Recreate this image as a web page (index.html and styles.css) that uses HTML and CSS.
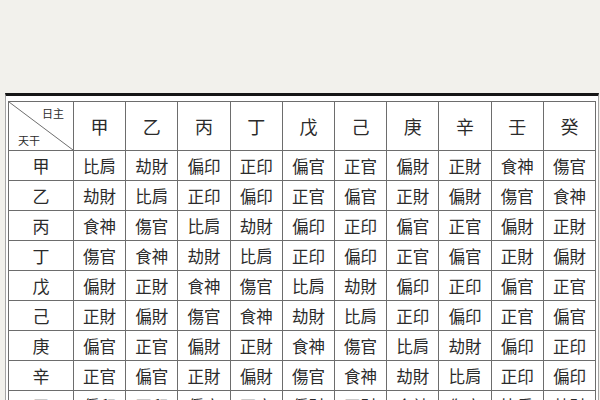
FILE: index.html
```html
<!DOCTYPE html>
<html lang="zh-Hant">
<head>
<meta charset="utf-8">
<title>十神表</title>
<link rel="stylesheet" href="styles.css">
</head>
<body>
<div class="sheet">
  <div class="grid">
    <div class="corner"><span class="day">日主</span><span class="stem">天干</span></div>
    <div class="head">甲</div><div class="head">乙</div><div class="head">丙</div><div class="head">丁</div><div class="head">戊</div><div class="head">己</div><div class="head">庚</div><div class="head">辛</div><div class="head">壬</div><div class="head">癸</div>

    <div class="label">甲</div><div class="cell">比肩</div><div class="cell">劫財</div><div class="cell">偏印</div><div class="cell">正印</div><div class="cell">偏官</div><div class="cell">正官</div><div class="cell">偏財</div><div class="cell">正財</div><div class="cell">食神</div><div class="cell">傷官</div>
    <div class="label">乙</div><div class="cell">劫財</div><div class="cell">比肩</div><div class="cell">正印</div><div class="cell">偏印</div><div class="cell">正官</div><div class="cell">偏官</div><div class="cell">正財</div><div class="cell">偏財</div><div class="cell">傷官</div><div class="cell">食神</div>
    <div class="label">丙</div><div class="cell">食神</div><div class="cell">傷官</div><div class="cell">比肩</div><div class="cell">劫財</div><div class="cell">偏印</div><div class="cell">正印</div><div class="cell">偏官</div><div class="cell">正官</div><div class="cell">偏財</div><div class="cell">正財</div>
    <div class="label">丁</div><div class="cell">傷官</div><div class="cell">食神</div><div class="cell">劫財</div><div class="cell">比肩</div><div class="cell">正印</div><div class="cell">偏印</div><div class="cell">正官</div><div class="cell">偏官</div><div class="cell">正財</div><div class="cell">偏財</div>
    <div class="label">戊</div><div class="cell">偏財</div><div class="cell">正財</div><div class="cell">食神</div><div class="cell">傷官</div><div class="cell">比肩</div><div class="cell">劫財</div><div class="cell">偏印</div><div class="cell">正印</div><div class="cell">偏官</div><div class="cell">正官</div>
    <div class="label">己</div><div class="cell">正財</div><div class="cell">偏財</div><div class="cell">傷官</div><div class="cell">食神</div><div class="cell">劫財</div><div class="cell">比肩</div><div class="cell">正印</div><div class="cell">偏印</div><div class="cell">正官</div><div class="cell">偏官</div>
    <div class="label">庚</div><div class="cell">偏官</div><div class="cell">正官</div><div class="cell">偏財</div><div class="cell">正財</div><div class="cell">食神</div><div class="cell">傷官</div><div class="cell">比肩</div><div class="cell">劫財</div><div class="cell">偏印</div><div class="cell">正印</div>
    <div class="label">辛</div><div class="cell">正官</div><div class="cell">偏官</div><div class="cell">正財</div><div class="cell">偏財</div><div class="cell">傷官</div><div class="cell">食神</div><div class="cell">劫財</div><div class="cell">比肩</div><div class="cell">正印</div><div class="cell">偏印</div>
    <div class="label">壬</div><div class="cell">偏印</div><div class="cell">正印</div><div class="cell">偏官</div><div class="cell">正官</div><div class="cell">偏財</div><div class="cell">正財</div><div class="cell">食神</div><div class="cell">傷官</div><div class="cell">比肩</div><div class="cell">劫財</div>
    <div class="label">癸</div><div class="cell">正印</div><div class="cell">偏印</div><div class="cell">正官</div><div class="cell">偏官</div><div class="cell">正財</div><div class="cell">偏財</div><div class="cell">傷官</div><div class="cell">食神</div><div class="cell">劫財</div><div class="cell">比肩</div>
  </div>
</div>
</body>
</html>
```
FILE: styles.css
```css
html {
  overflow: hidden;
}
body {
  margin: 0;
  background: #f2f1ec;
  font-family: "Noto Sans CJK TC", "Noto Sans CJK SC", sans-serif;
  color: #2b2b2b;
}
.sheet {
  margin: 93px 0 0 5px;
  width: 588px;
  padding: 5px 2px 0 2px;
  background: #fff;
  border-top: 3px solid #161616;
  border-left: 1px solid #a4a4a4;
  border-right: 1px solid #a4a4a4;
}
.grid {
  display: grid;
  grid-template-columns: 64px repeat(10, 1fr);
  grid-template-rows: 48px;
  grid-auto-rows: 29px;
  gap: 1px;
  background: #6d6d6d;
  border: 1px solid #6d6d6d;
}
.grid > div {
  background: #fff;
  display: flex;
  align-items: center;
  justify-content: center;
}
.head {
  font-size: 18px;
}
.label {
  font-size: 17px;
}
.cell {
  font-size: 16.5px;
}
.grid > .corner {
  background: linear-gradient(to top right, #fff calc(50% - 0.8px), #6d6d6d 50%, #fff calc(50% + 0.8px));
  flex-direction: column;
  align-items: stretch;
  justify-content: space-between;
  padding: 5px 9px 3px 9px;
  font-size: 11px;
  line-height: 13px;
}
.day {
  align-self: flex-end;
}
.stem {
  align-self: flex-start;
}
```
